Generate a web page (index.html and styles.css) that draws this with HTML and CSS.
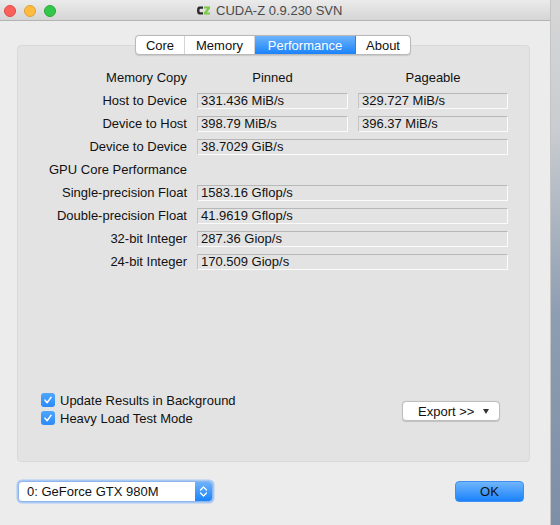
FILE: index.html
```html
<!DOCTYPE html>
<html>
<head>
<meta charset="utf-8">
<link rel="stylesheet" href="styles.css">
</head>
<body>
<div class="screen">
  <div class="window">
    <div class="titlebar">
      <div class="lights">
        <span class="light red"></span>
        <span class="light yellow"></span>
        <span class="light green"></span>
      </div>
      <div class="title">
        <svg class="logo" width="15" height="11" viewBox="0 0 15 11">
          <path d="M7 1.5 H3.5 Q1 1.5 1 5.5 Q1 9.5 3.5 9.5 H7 V7.2 H4.2 Q3.4 7.2 3.4 5.5 Q3.4 3.8 4.2 3.8 H7 Z" fill="#2b2b2b"/>
          <path d="M8 1.5 H14 V3.4 L10.8 7.4 H14 V9.5 H8 V7.6 L11.2 3.6 H8 Z" fill="#7ac943"/>
        </svg>
        <span>CUDA-Z 0.9.230 SVN</span>
      </div>
    </div>
    <div class="body">
      <div class="tabs">
        <span class="tab">Core</span>
        <span class="tab">Memory</span>
        <span class="tab active">Performance</span>
        <span class="tab">About</span>
      </div>
      <div class="pane">
        <div class="grid">
          <div class="label">Memory Copy</div>
          <div class="colhead">Pinned</div>
          <div class="colhead">Pageable</div>

          <div class="label">Host to Device</div>
          <div class="field">331.436 MiB/s</div>
          <div class="field">329.727 MiB/s</div>

          <div class="label">Device to Host</div>
          <div class="field">398.79 MiB/s</div>
          <div class="field">396.37 MiB/s</div>

          <div class="label">Device to Device</div>
          <div class="field wide">38.7029 GiB/s</div>

          <div class="label">GPU Core Performance</div>
          <div class="empty"></div>

          <div class="label">Single-precision Float</div>
          <div class="field wide">1583.16 Gflop/s</div>

          <div class="label">Double-precision Float</div>
          <div class="field wide">41.9619 Gflop/s</div>

          <div class="label">32-bit Integer</div>
          <div class="field wide">287.36 Giop/s</div>

          <div class="label">24-bit Integer</div>
          <div class="field wide">170.509 Giop/s</div>
        </div>
        <div class="options">
          <div class="checks">
            <label class="check"><span class="box"><svg width="10" height="10" viewBox="0 0 10 10"><path d="M2 5.2 L4.2 7.6 L8 2.4" fill="none" stroke="#fff" stroke-width="1.6" stroke-linecap="round" stroke-linejoin="round"/></svg></span>Update Results in Background</label>
            <label class="check"><span class="box"><svg width="10" height="10" viewBox="0 0 10 10"><path d="M2 5.2 L4.2 7.6 L8 2.4" fill="none" stroke="#fff" stroke-width="1.6" stroke-linecap="round" stroke-linejoin="round"/></svg></span>Heavy Load Test Mode</label>
          </div>
          <div class="export">Export &gt;&gt; <span class="caret"></span></div>
        </div>
      </div>
      <div class="footer">
        <div class="combo">
          <span class="combo-text">0: GeForce GTX 980M</span>
          <span class="stepper">
            <svg width="9" height="13" viewBox="0 0 9 13"><path d="M1.5 5 L4.5 2 L7.5 5 M1.5 8 L4.5 11 L7.5 8" fill="none" stroke="#fff" stroke-width="1.3" stroke-linecap="round" stroke-linejoin="round"/></svg>
          </span>
        </div>
        <div class="ok">OK</div>
      </div>
    </div>
  </div>
  <div class="desktop"></div>
</div>
</body>
</html>
```

FILE: styles.css
```css
* { box-sizing: border-box; }
html, body { margin: 0; padding: 0; }
body {
  font-family: "Liberation Sans", Arial, sans-serif;
  font-size: 13px;
  color: #111;
  width: 560px;
  height: 525px;
  overflow: hidden;
}
.screen {
  display: flex;
  width: 560px;
  height: 525px;
}
.window {
  width: 551px;
  height: 525px;
  background: #ececec;
  border-right: 1px solid #c4c4c4;
  display: flex;
  flex-direction: column;
}
.desktop {
  flex: 1;
  background: linear-gradient(to bottom, #d6d6d6 0%, #c9ccd0 25%, #8d9db2 60%, #7d8ea7 100%);
}
.titlebar {
  height: 21px;
  background: linear-gradient(to bottom, #ebebeb, #d5d5d5);
  border-bottom: 1px solid #b3b3b3;
  display: flex;
  align-items: center;
  position: relative;
}
.lights {
  display: flex;
  gap: 8px;
  padding-left: 4px;
  padding-top: 1px;
}
.light {
  width: 12px;
  height: 12px;
  border-radius: 50%;
  display: block;
}
.red { background: #fc605c; border: 1px solid #de4a46; }
.yellow { background: #fdbc40; border: 1px solid #dea236; }
.green { background: #34c84a; border: 1px solid #2aa83b; }
.title {
  display: flex;
  align-items: center;
  gap: 5px;
  margin-left: 140px;
  color: #4a4a4a;
  font-size: 13px;
  padding-top: 1px;
}
.logo { display: block; }
.body {
  flex: 1;
  padding: 14px 20px 0 17px;
  display: flex;
  flex-direction: column;
}
.tabs {
  display: flex;
  align-self: flex-start;
  margin-left: 118px;
  height: 20px;
  margin-bottom: -10px;
  position: relative;
  z-index: 1;
  background: #fff;
  border: 1px solid #b9b9b9;
  border-radius: 4px;
  box-shadow: 0 0.5px 1px rgba(0,0,0,0.12);
  overflow: hidden;
}
.tab {
  display: flex;
  align-items: center;
  justify-content: center;
  height: 18px;
  border-right: 1px solid #d4d4d4;
  color: #111;
}
.tab:nth-child(1) { width: 49px; }
.tab:nth-child(2) { width: 70px; }
.tab:nth-child(3) { width: 101px; }
.tab:nth-child(4) { width: 54px; border-right: none; }
.tab.active {
  background: linear-gradient(to bottom, #6db3fb, #1b83fb);
  color: #fff;
  border-right-color: #1b83fb;
}
.pane {
  height: 417px;
  background: #e3e3e3;
  border: 1px solid #d9d9d9;
  border-radius: 4px;
  padding-top: 24px;
  display: flex;
  flex-direction: column;
}
.grid {
  display: grid;
  grid-template-columns: 169px 151px 150px;
  column-gap: 10px;
  row-gap: 7px;
  grid-auto-rows: 16px;
}
.label {
  text-align: right;
  line-height: 16px;
  white-space: nowrap;
}
.colhead {
  text-align: center;
  line-height: 16px;
}
.field {
  border-top: 1px solid #b7b7b7;
  border-left: 1px solid #c4c4c4;
  border-right: 1px solid #fbfbfb;
  border-bottom: 1px solid #fbfbfb;
  padding-left: 3px;
  line-height: 14px;
  white-space: nowrap;
}
.field.wide { grid-column: 2 / 4; }
.empty { grid-column: 2 / 4; }
.options {
  margin-top: auto;
  padding: 0 29px 32px 23px;
  display: flex;
  justify-content: space-between;
  align-items: center;
}
.checks {
  display: flex;
  flex-direction: column;
  padding-bottom: 2px;
}
.check {
  display: flex;
  align-items: center;
  height: 18px;
  gap: 5px;
}
.box {
  width: 14px;
  height: 14px;
  border-radius: 3px;
  background: linear-gradient(to bottom, #4ea6fc, #2a8af9);
  display: flex;
  align-items: center;
  justify-content: center;
}
.box svg { display: block; }
.export {
  width: 98px;
  height: 20px;
  margin-top: 2px;
  background: #fff;
  border: 1px solid #bdbdbd;
  border-radius: 4px;
  box-shadow: 0 0.5px 1px rgba(0,0,0,0.15);
  display: flex;
  align-items: center;
  padding-left: 15px;
  gap: 3px;
}
.caret {
  display: inline-block;
  width: 0;
  height: 0;
  border-left: 3.5px solid transparent;
  border-right: 3.5px solid transparent;
  border-top: 5px solid #333;
  margin-left: 6px;
  margin-top: 1px;
}
.footer {
  margin-top: 19px;
  padding: 0 6px 0 1px;
  display: flex;
  justify-content: space-between;
  align-items: center;
}
.combo {
  width: 195px;
  height: 21px;
  background: #fff;
  border: 1px solid #8fb6ec;
  border-radius: 4px;
  box-shadow: 0 0 0 1.5px #a9c9f5;
  display: flex;
  align-items: stretch;
  overflow: hidden;
}
.combo-text {
  flex: 1;
  padding-left: 8px;
  line-height: 19px;
}
.stepper {
  width: 17px;
  background: linear-gradient(to bottom, #6db3fb, #1b83fb);
  display: flex;
  align-items: center;
  justify-content: center;
}
.stepper svg { display: block; }
.ok {
  width: 69px;
  height: 21px;
  border-radius: 4px;
  background: linear-gradient(to bottom, #6fb5fb, #1a82fb);
  border: 1px solid #3d90f0;
  display: flex;
  align-items: center;
  justify-content: center;
  color: #111;
}
```
